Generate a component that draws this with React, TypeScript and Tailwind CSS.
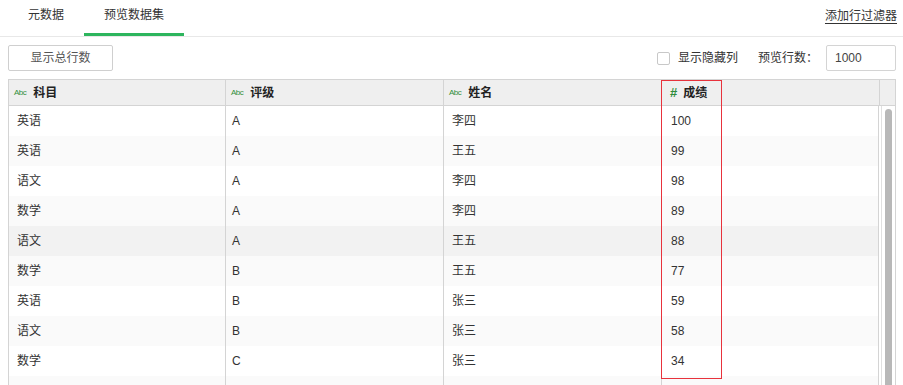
import React from "react";

const rows = [
  ["英语", "A", "李四", "100"],
  ["英语", "A", "王五", "99"],
  ["语文", "A", "李四", "98"],
  ["数学", "A", "李四", "89"],
  ["语文", "A", "王五", "88"],
  ["数学", "B", "王五", "77"],
  ["英语", "B", "张三", "59"],
  ["语文", "B", "张三", "58"],
  ["数学", "C", "张三", "34"],
  ["", "", "", ""],
];

const rowBg = [
  "bg-white",
  "bg-[#fafafa]",
  "bg-white",
  "bg-[#fafafa]",
  "bg-[#f2f2f2]",
  "bg-[#fafafa]",
  "bg-white",
  "bg-[#fafafa]",
  "bg-white",
  "bg-[#fafafa]",
];

function Abc() {
  return (
    <span className="text-[8px] leading-none font-normal text-[#2f8f3c] mr-[7px] tracking-[-0.5px]">
      Abc
    </span>
  );
}

export default function App() {
  const font = { fontFamily: '"Liberation Sans", "Noto Sans CJK SC", Arial, sans-serif' };
  return (
    <div className="w-[903px] h-[385px] overflow-hidden bg-white text-[12px] text-[#333]" style={font}>
      {/* tabs */}
      <div className="flex items-end h-[37px] border-b border-[#e8e8e8] pl-[8px] pr-[6px]">
        <div className="h-[36px] w-[76px] flex items-center justify-center pb-[6px] text-[#333]">元数据</div>
        <div className="h-[36px] w-[100px] flex items-center justify-center pb-[6px] border-b-[3px] border-[#2db55d] text-[#333]">
          <span className="pt-[3px]">预览数据集</span>
        </div>
        <div className="flex-1" />
        <div className="h-[36px] flex items-center pb-[4px]">
          <span className="underline underline-offset-[3px] text-[#333]">添加行过滤器</span>
        </div>
      </div>

      {/* toolbar */}
      <div className="flex items-center h-[42px] pl-[8px] pr-[7px]">
        <button className="w-[105px] h-[26px] border border-[#cfcfcf] rounded-[2px] text-[#555] bg-white">
          显示总行数
        </button>
        <div className="flex-1" />
        <div className="w-[13px] h-[13px] border border-[#c8c8c8] rounded-[2px] bg-white mr-[8px]" />
        <span className="text-[#333]">显示隐藏列</span>
        <span className="ml-[20px] text-[#333]">预览行数：</span>
        <div className="ml-[8px] w-[70px] h-[26px] border border-[#d4d4d4] rounded-[2px] flex items-center pl-[8px] text-[#444]">
          1000
        </div>
      </div>

      {/* table */}
      <div className="relative ml-[8px] w-[888px] border-t border-l border-r border-[#d4d4d4]">
        {/* header */}
        <div className="flex h-[26px] bg-[#efefef] border-b border-[#d4d4d4] font-bold text-[#222]">
          <div className="w-[217px] border-r border-[#d4d4d4] flex items-center pl-[5px]">
            <Abc />
            <span>科目</span>
          </div>
          <div className="w-[218px] border-r border-[#d4d4d4] flex items-center pl-[5px]">
            <Abc />
            <span>评级</span>
          </div>
          <div className="w-[218px] border-r border-[#d4d4d4] flex items-center pl-[5px]">
            <Abc />
            <span>姓名</span>
          </div>
          <div className="w-[218px] border-r border-[#d4d4d4] flex items-center pl-[8px]">
            <span className="text-[#2e8b3a] text-[13px] mr-[6px]">#</span>
            <span>成绩</span>
          </div>
          <div className="flex-1" />
        </div>
        {/* body */}
        <div className="flex">
          <div className="w-[870px]">
            {rows.map((r, i) => (
              <div key={i} className={`flex h-[30px] ${rowBg[i]}`}>
                <div className="w-[217px] border-r border-[#d4d4d4] flex items-center pl-[8px]">{r[0]}</div>
                <div className="w-[218px] border-r border-[#d4d4d4] flex items-center pl-[6px]">{r[1]}</div>
                <div className="w-[218px] border-r border-[#d4d4d4] flex items-center pl-[8px]">{r[2]}</div>
                <div className="w-[217px] border-r border-[#d4d4d4] flex items-center pl-[9px]">{r[3]}</div>
              </div>
            ))}
          </div>
          <div className="flex-1 pl-[2px]">
            <div className="h-full border-l border-[#e0e0e0] pl-[3px] pt-[3px]">
              <div className="w-[7px] h-[300px] bg-[#b8b8b8] rounded-t-[4px]" />
            </div>
          </div>
        </div>
        {/* highlight box */}
        <div className="absolute left-[652px] top-0 w-[61px] h-[299px] border border-[#e8323c] pointer-events-none" />
      </div>
    </div>
  );
}
